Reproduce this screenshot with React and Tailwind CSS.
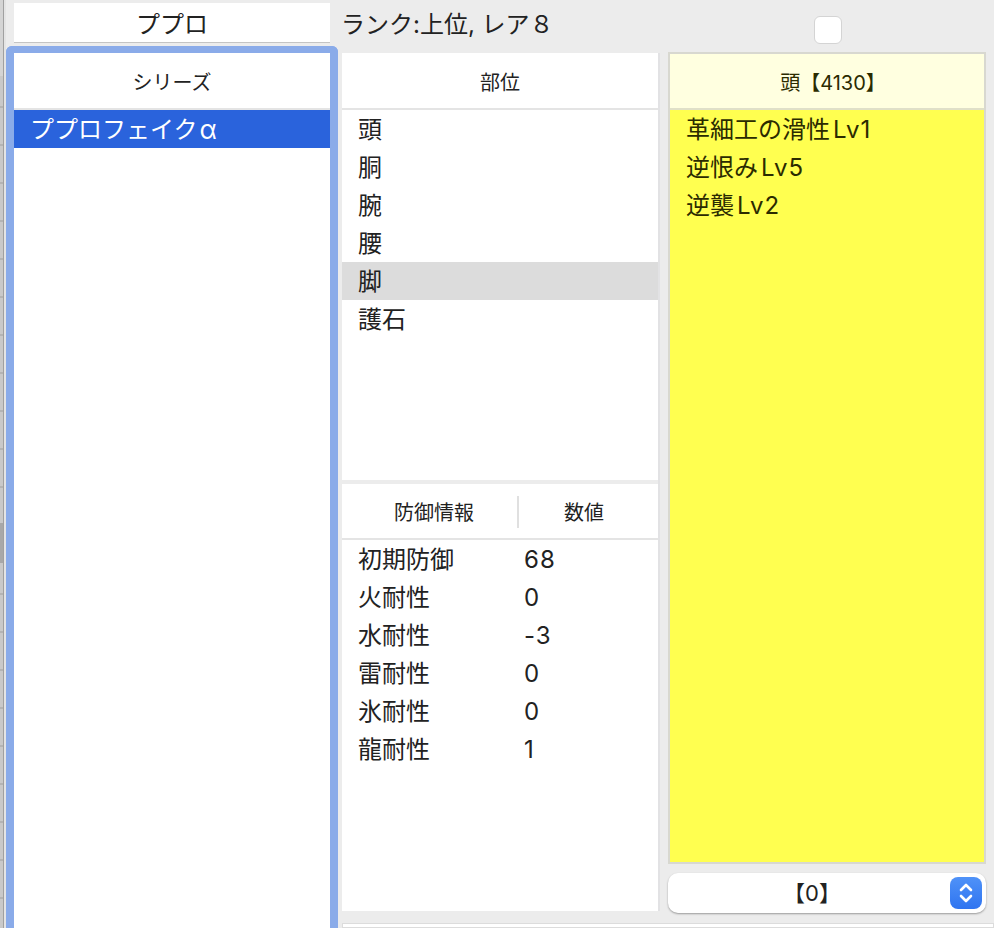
import React from "react";

const font = "font-['Inter','Noto_Sans_CJK_JP',sans-serif]";
const ticks =
  "bg-[repeating-linear-gradient(to_bottom,#c9c9c9_0px,#c9c9c9_30px,#b4b4b4_30px,#b4b4b4_32px,#c9c9c9_32px,#c9c9c9_38px)]";

const parts = ["頭", "胴", "腕", "腰", "脚", "護石"];

const defense = [
  ["初期防御", "68"],
  ["火耐性", "0"],
  ["水耐性", "-3"],
  ["雷耐性", "0"],
  ["氷耐性", "0"],
  ["龍耐性", "1"],
];

const skills = [
  ["革細工の滑性", "Lv1"],
  ["逆恨み", "Lv5"],
  ["逆襲", "Lv2"],
];

const App = () => {
  return (
    <div className={`${font} flex h-[928px] w-[994px] overflow-hidden bg-[#ececec] text-[#222]`}>
      {/* window behind, only a sliver shows */}
      <div className="flex w-[6px] shrink-0">
        <div className="flex h-full w-[3px] flex-col">
          <div className="h-[76px] bg-[#d4d4d4]"></div>
          <div className={`h-[447px] ${ticks}`}></div>
          <div className="h-10 bg-[#a8a8a8]"></div>
          <div className={`flex-1 ${ticks}`}></div>
        </div>
        <div className="h-full w-px bg-[#a0a0a0]"></div>
        <div className="h-full w-0.5 bg-[#e4e4e4]"></div>
      </div>

      {/* series column */}
      <div className="flex w-[332px] shrink-0 flex-col">
        <div className="mx-2 mt-[3px] flex h-10 items-center justify-center border-b border-[#c4c4c4] bg-white pt-1 text-2xl">
          ププロ
        </div>
        <div className="mt-[3px] flex-1 rounded-t-md border-x-8 border-t-[7px] border-[#8aabe9] bg-white">
          <div className="flex h-[57px] items-center justify-center border-b-2 border-[#e4e4e4] pt-1 text-xl">
            シリーズ
          </div>
          <div className="flex h-[38px] items-center bg-[#2a63dc] pl-4 pt-0.5 text-2xl text-white">
            ププロフェイク<span className="ml-0.5 text-[26px]">α</span>
          </div>
        </div>
      </div>

      <div className="ml-1 flex w-[652px] shrink-0 flex-col">
        {/* top row */}
        <div className="flex h-[53px] shrink-0">
          <div className="-ml-px mt-[7px] h-9 w-[473px] text-2xl leading-9">ランク:上位, レア８</div>
          <div className="mt-4 h-7 w-7 rounded-md border border-[#d4d4d4] bg-white"></div>
        </div>

        <div className="flex h-[858px] shrink-0">
          {/* parts + defense */}
          <div className="flex w-[318px] shrink-0 flex-col border-r-2 border-[#e2e2e4]">
            <div className="flex h-[427px] flex-col bg-white">
              <div className="flex h-[57px] shrink-0 items-center justify-center border-b-2 border-[#e4e4e4] pt-1 text-xl">
                部位
              </div>
              {parts.map((p, i) => (
                <div
                  key={p}
                  className={`flex h-[38px] shrink-0 items-center pl-4 pt-0.5 text-2xl ${i === 4 ? "bg-[#dcdcdc]" : ""}`}
                >
                  {p}
                </div>
              ))}
            </div>
            <div className="mt-1 flex flex-1 flex-col bg-white">
              <div className="flex h-[56px] shrink-0 items-center border-b-2 border-[#e4e4e4] text-xl">
                <div className="flex w-[175px] justify-center pl-[9px] pt-1">防御情報</div>
                <div className="mt-0.5 h-8 w-0.5 bg-[#e0e0e0]"></div>
                <div className="flex flex-1 justify-center pr-[9px] pt-1">数値</div>
              </div>
              {defense.map(([k, v]) => (
                <div key={k} className="flex h-[38px] shrink-0 items-center pt-0.5 text-2xl">
                  <div className="w-[182px] pl-4">{k}</div>
                  <div className="tracking-[1px]">{v}</div>
                </div>
              ))}
            </div>
          </div>

          {/* skills + select */}
          <div className="ml-[8px] flex w-[318px] shrink-0 flex-col">
            <div className="-mt-px flex h-[812px] shrink-0 flex-col border-2 border-[#d8d8d0] bg-[#ffff50] text-[#2b2b00]">
              <div className="flex h-[56px] shrink-0 items-center justify-center border-b-2 border-[#e0e0c8] bg-[#ffffe0] pl-3 pt-1 text-xl">
                頭【4130】
              </div>
              {skills.map(([name, level]) => (
                <div key={name} className="flex h-[38px] shrink-0 items-center pl-4 pt-0.5 text-2xl">
                  {name}
                  <span className="ml-[3px] tracking-[1px]">{level}</span>
                </div>
              ))}
            </div>
            <div className="relative mt-[9px] flex h-10 shrink-0 items-center justify-center rounded-[10px] bg-white pr-[30px] text-[22px] shadow-[0_1px_2px_rgba(0,0,0,0.35)]">
              【0】
              <div className="absolute right-1 top-1 flex h-8 w-8 items-center justify-center rounded-lg bg-gradient-to-b from-[#4f92f8] to-[#2f74f0]">
                <svg width="20" height="26" viewBox="0 0 20 26" fill="none" stroke="white" strokeWidth="2.6" strokeLinecap="round" strokeLinejoin="round">
                  <path d="M5 10l5-5 5 5" />
                  <path d="M5 16l5 5 5-5" />
                </svg>
              </div>
            </div>
          </div>
        </div>

        {/* next panel, cut off by the window */}
        <div className="mt-[12px] flex-1 border border-[#dcdcdc] bg-white"></div>
      </div>
    </div>
  );
};

export default App;
